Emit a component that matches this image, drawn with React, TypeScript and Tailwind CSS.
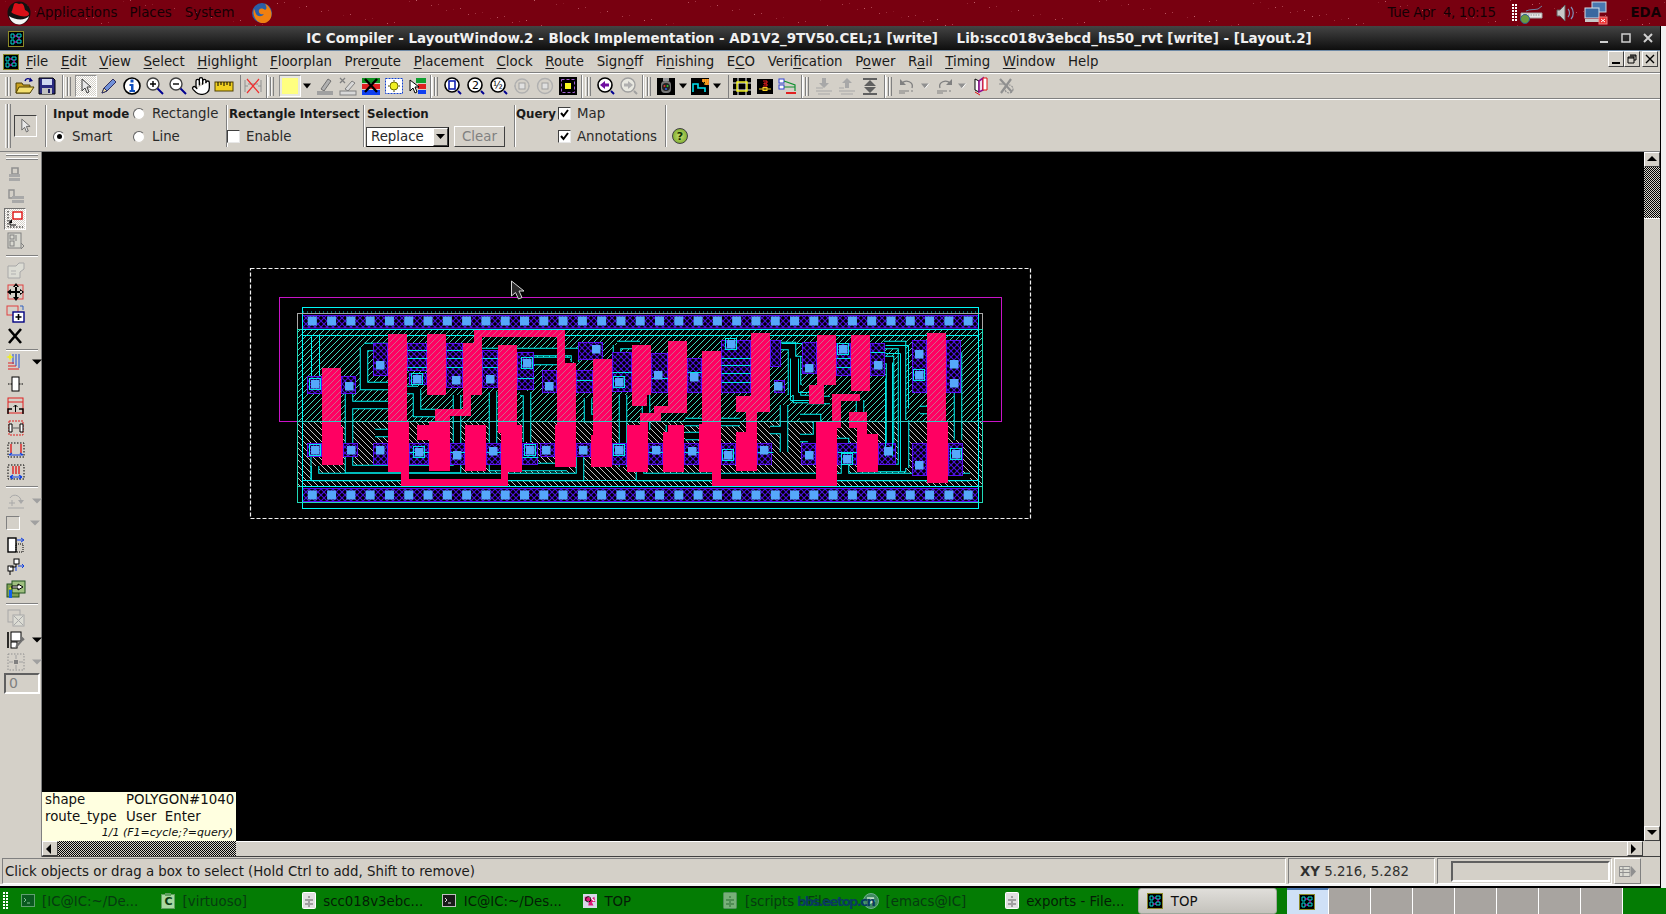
import type { ReactNode } from 'react'
import { Hand } from 'lucide-react'

// pseudo random speckles for the wallpaper strip
const speckles = Array.from({ length: 170 }, (_, i) => {
  const a = (i * 7919 + 13) % 1666
  const b = (i * 104729 + 7) % 26
  return { x: a, y: b, o: 0.12 + ((i * 31) % 10) / 22 }
})

const menus = [
  ['File', 0], ['Edit', 0], ['View', 0], ['Select', 0], ['Highlight', 0], ['Floorplan', 0], ['Preroute', 4],
  ['Placement', 0], ['Clock', 0], ['Route', 0], ['Signoff', 4], ['Finishing', 2], ['ECO', 1], ['Verification', 4],
  ['Power', 1], ['Rail', 1], ['Timing', 0], ['Window', 0], ['Help', -1],
] as const

const tasks = [
  { kind: 'term', label: '[IC@IC:~/De...', dim: true },
  { kind: 'virt', label: '[virtuoso]', dim: true },
  { kind: 'file', label: 'scc018v3ebc...', dim: false },
  { kind: 'term2', label: 'IC@IC:~/Des...', dim: false },
  { kind: 'top', label: 'TOP', dim: false },
  { kind: 'filedim', label: '[scripts - File...', dim: true },
  { kind: 'emacs', label: '[emacs@IC]', dim: true },
  { kind: 'file', label: 'exports - File...', dim: false },
]

// layout data, in screen pixels
const pink = [
  [322, 368, 19, 53], [322, 421, 19, 6], [322, 427, 21, 38],
  [388, 334, 19, 88], [388, 422, 21, 50],
  [427, 334, 19, 61],
  [463, 343, 19, 52], [474, 330, 91, 7], [474, 330, 8, 14], [557, 330, 8, 33], [557, 363, 19, 62], [555, 425, 21, 42],
  [463, 395, 8, 21], [435, 409, 36, 7], [435, 416, 15, 6], [417, 425, 33, 15], [429, 422, 21, 49],
  [465, 425, 21, 46],
  [498, 345, 19, 80], [498, 425, 24, 8], [501, 433, 21, 39],
  [401, 472, 8, 14], [401, 479, 107, 7], [501, 472, 7, 14],
  [593, 359, 19, 63], [593, 422, 19, 13], [591, 435, 21, 32],
  [632, 345, 19, 50], [632, 395, 15, 11], [640, 413, 21, 9], [640, 422, 8, 5], [654, 406, 33, 7], [668, 341, 19, 72],
  [627, 425, 21, 47],
  [668, 425, 16, 7], [663, 432, 21, 40],
  [702, 351, 19, 73], [699, 424, 22, 48], [712, 472, 9, 14], [712, 479, 125, 7],
  [751, 333, 19, 79], [736, 396, 34, 16], [746, 412, 11, 20], [736, 432, 21, 39],
  [817, 335, 19, 50], [809, 385, 15, 19],
  [816, 422, 21, 64],
  [851, 335, 19, 56], [832, 394, 28, 7], [832, 394, 9, 34],
  [849, 412, 18, 16], [857, 428, 10, 6], [857, 434, 21, 38],
  [927, 333, 19, 89], [927, 422, 21, 61],
]

const purple = [
  [307, 376, 15, 18], [341, 376, 15, 18], [373, 343, 15, 33], [407, 343, 20, 28], [409, 373, 18, 12], [446, 343, 17, 45],
  [482, 350, 16, 38], [517, 352, 17, 38], [542, 370, 15, 23], [576, 370, 17, 23], [578, 342, 25, 18], [612, 352, 20, 40],
  [651, 353, 17, 40], [687, 358, 15, 35], [721, 340, 30, 53], [770, 340, 11, 27], [774, 380, 11, 13], [802, 342, 15, 32],
  [836, 343, 15, 33], [870, 343, 15, 33], [912, 340, 15, 53], [946, 340, 15, 53],
  [307, 443, 15, 14], [343, 443, 15, 14], [373, 443, 15, 22], [409, 443, 20, 22], [450, 443, 15, 22], [486, 443, 15, 22],
  [522, 443, 16, 22], [540, 443, 15, 14], [576, 443, 15, 14], [612, 443, 15, 22], [648, 443, 15, 22], [684, 443, 15, 22],
  [721, 443, 15, 22], [757, 443, 15, 22], [801, 443, 15, 22], [837, 443, 20, 22], [878, 443, 18, 22], [912, 443, 15, 33],
  [948, 443, 15, 33],
]

const contacts = [
  [315, 384], [349, 386], [380, 365], [417, 379], [456, 380], [490, 379], [527, 363], [549, 386], [596, 349], [619, 382],
  [658, 375], [694, 377], [731, 344], [778, 386], [809, 368], [843, 349], [878, 365], [919, 354], [919, 375], [954, 364], [954, 383],
  [315, 450], [351, 450], [380, 450], [419, 452], [457, 455], [493, 451], [530, 450], [546, 450], [583, 450], [619, 450],
  [656, 450], [692, 451], [728, 455], [764, 450], [809, 455], [847, 459], [888, 451], [919, 465], [956, 454],
]

const wires = [
  '364 347 H388 M364 347 V386 H388',
  '349 383 V469 H457 V395',
  '315 466 V477 H580 V450',
  '349 405 H388',
  '375 433 H388',
  '417 390 V413 H437 M407 390 H417',
  '527 392 V442 M520 392 H527',
  '493 392 V467 H567',
  '482 352 H575 V362',
  '515 361 H570',
  '588 398 V418 H593',
  '482 370 H517',
  '407 350 H427 M407 362 H427',
  '446 352 H463 M446 366 H463',
  '617 345 H640 M617 345 V352',
  '623 395 V467',
  '640 470 V477 H970',
  '646 395 V430',
  '721 350 H751 M721 366 H751 M721 380 H751',
  '775 346 H792 V395 M792 388 H802',
  '789 360 H797 V399 H815',
  '784 405 V452 M784 430 H770',
  '800 418 H817 V438 H800',
  '830 400 H808 M808 442 H845 V476',
  '884 345 H902 V468 H860',
  '876 360 H890 V450',
  '860 400 V418',
  '920 410 H934 M905 420 V468',
  '958 352 V440',
  '685 422 H740 M685 436 H712',
  '670 425 V440',
]

// thin metal edges that run over the diffusion
const edges =
  'M721 358H751M721 365H751M721 373H751M721 382H751' +
  'M407 350H427M407 358H427M407 367H427M446 350H463M446 358H463M446 367H463M482 358H498M482 367H498' +
  'M790 358V400H810M798 358V392H809M781 343H802M885 345H908V408M885 353H900V471M892 362V456M885 378V456' +
  'M836 358H851M836 367H851M870 352H885M517 378H534M576 380H593M612 372H632M651 378H668M687 372H702' +
  'M409 452H429M450 452H465M486 452H501M522 457H538M648 452H663M684 452H699M757 452H773M837 452H857'

function Ico({ children, s = 20 }: { children: ReactNode; s?: number }) {
  return (
    <svg width={s} height={s} viewBox="0 0 20 20" className="block">
      {children}
    </svg>
  )
}

function Handle({ className = '' }: { className?: string }) {
  return (
    <div className={`flex h-[19px] w-[6px] shrink-0 justify-between ${className}`}>
      <div className="w-[3px] border-x border-l-[#f4f4f4] border-r-[#808080] bg-[#d4d0c8]" />
      <div className="w-[3px] border-x border-l-[#f4f4f4] border-r-[#808080] bg-[#d4d0c8]" />
    </div>
  )
}

function Groove({ className = '' }: { className?: string }) {
  return <div className={`h-[23px] w-[2px] shrink-0 border-r border-r-white bg-[#808080] ${className}`} />
}

function Tool({ children, w = 'w-[23px]' }: { children?: ReactNode; w?: string }) {
  return <div className={`flex h-[22px] shrink-0 items-center justify-center ${w}`}>{children}</div>
}

function Drop({ gray, w = 'w-[11px]' }: { gray?: boolean; w?: string }) {
  return (
    <Tool w={w}>
      <svg width="10" height="6" viewBox="0 0 10 6" className="block">
        <path d="M1 0.5H9L5 5.5Z" fill={gray ? '#909090' : '#000'} />
        {gray && <path d="M9 0.5L5 5.5" stroke="#fff" fill="none" />}
      </svg>
    </Tool>
  )
}

function ICLogo({ s = 16 }: { s?: number }) {
  return (
    <svg width={s} height={s} viewBox="0 0 16 16" className="block shrink-0">
      <rect x="0.5" y="0.5" width="15" height="15" fill="#000" stroke="#8c8a28" />
      <path d="M3 3H6V7H3ZM3 9H6V13H3ZM9 3H13V6H9ZM9 9H13V12H9Z" fill="none" stroke="#00d8d8" />
      <path d="M6 5H9M6 11H9M11 6V9" stroke="#e020e0" fill="none" />
    </svg>
  )
}

function Gripper() {
  return (
    <svg width="5" height="18" viewBox="0 0 5 18" className="block shrink-0">
      {[0, 3, 6, 9, 12, 15].map(y => (
        <g key={y}>
          <rect x="0" y={y} width="2" height="2" fill="#fff" />
          <rect x="3" y={y} width="2" height="2" fill="#fff" />
        </g>
      ))}
    </svg>
  )
}

function MiniCircle({ children }: { children: ReactNode }) {
  return (
    <Ico>
      <circle cx="9" cy="9" r="7" fill="#fff" stroke="#000" strokeWidth="1.6" />
      <path d="M15 15L18 18" stroke="#000090" strokeWidth="2" />
      {children}
    </Ico>
  )
}

function TopToolbar() {
  return (
    <div className="flex h-[24px] items-center">
      <Handle className="ml-[5px] mr-[3px]" />
      <Tool w="w-[22px]">
        <Ico>
          <path d="M1 7H7L8 9H15V17H1Z" fill="#c8a020" stroke="#504000" />
          <path d="M1 17L4 11H19L15 17Z" fill="#f4e070" stroke="#504000" />
          <path d="M10 5C11 2 14 2 16 4" fill="none" stroke="#000080" strokeWidth="1.4" />
          <path d="M15 1.5L18 5L14 6Z" fill="#000080" />
        </Ico>
      </Tool>
      <Tool w="w-[22px]">
        <Ico>
          <path d="M2 2H16L18 4V18H2Z" fill="#2a2a80" stroke="#000" />
          <rect x="5" y="3" width="10" height="6" fill="#d0d8f0" />
          <rect x="5" y="12" width="10" height="6" fill="#c0c0c0" />
          <rect x="11" y="13" width="2" height="4" fill="#202060" />
        </Ico>
      </Tool>
      <Groove className="ml-[4px]" />
      <Handle className="ml-[1px] mr-[3px]" />
      <Tool w="w-[23px]">
        <div className="flex h-[22px] w-[22px] items-center justify-center border border-t-[#909090] border-l-[#909090] border-r-white border-b-white bg-[repeating-conic-gradient(#ffffff_0_25%,#d4d0c8_0_50%)] bg-[length:2px_2px]">
          <svg width="12" height="16" viewBox="0 0 12 16" className="block">
            <path d="M2 1V13L5 10L7 15L9 14L7 9H11Z" fill="#e8e8e8" stroke="#404040" />
          </svg>
        </div>
      </Tool>
      <Tool>
        <Ico>
          <path d="M3 17L5 12L14 3L17 6L8 15Z" fill="#7090d8" stroke="#303060" />
          <path d="M3 17L5 12L8 15Z" fill="#f0e0a0" stroke="#303060" />
        </Ico>
      </Tool>
      <Tool>
        <Ico>
          <circle cx="10" cy="10" r="8" fill="#fff" stroke="#000" strokeWidth="1.6" />
          <rect x="8.5" y="3.5" width="3" height="3" fill="#1050c0" />
          <path d="M7.5 8H11.5V14H13V16H7.5V14H9V10H7.5Z" fill="#1050c0" />
        </Ico>
      </Tool>
      <Tool>
        <Ico>
          <circle cx="8" cy="8" r="6" fill="#fff" stroke="#404040" strokeWidth="1.4" />
          <path d="M5 8H11M8 5V11" stroke="#000" strokeWidth="1.4" />
          <path d="M12.5 12.5L18 18" stroke="#000090" strokeWidth="2" />
        </Ico>
      </Tool>
      <Tool>
        <Ico>
          <circle cx="8" cy="8" r="6" fill="#fff" stroke="#404040" strokeWidth="1.4" />
          <path d="M5 8H11" stroke="#000" strokeWidth="1.4" />
          <path d="M12.5 12.5L18 18" stroke="#000090" strokeWidth="2" />
        </Ico>
      </Tool>
      <Tool>
        <Hand size={20} fill="#fff" color="#000" strokeWidth={1.6} />
      </Tool>
      <Tool>
        <Ico>
          <rect x="1" y="6" width="18" height="9" fill="#f0d020" stroke="#504000" />
          <path d="M4 6V10M7 6V9M10 6V10M13 6V9M16 6V10" stroke="#000" />
        </Ico>
      </Tool>
      <Groove className="ml-[5px] !w-[1px] !border-0" />
      <Tool>
        <Ico>
          <path d="M2 4V16M18 4V16M2 10H5M15 10H18M5 8H15" stroke="#909090" fill="none" />
          <path d="M4 3L16 17M16 3L4 17" stroke="#f03030" strokeWidth="1.2" />
        </Ico>
      </Tool>
      <Groove className="ml-[2px]" />
      <Handle className="mr-[5px]" />
      <Tool w="w-[22px]">
        <div className="flex h-[22px] w-[22px] items-center justify-center border border-t-[#909090] border-l-[#909090] border-r-white border-b-white bg-[#e8e8e0]">
          <div className="h-[16px] w-[16px] bg-[#ffff80]" />
        </div>
      </Tool>
      <Drop />
      <div className="w-[1px] shrink-0" />
      <Tool>
        <Ico>
          <path d="M6 13L13 3L16 5L9 15Z" fill="#b0b0b0" stroke="#707070" />
          <rect x="2" y="15" width="16" height="4" fill="#a0a0a0" />
        </Ico>
      </Tool>
      <Tool>
        <Ico>
          <path d="M2 2L7 7M7 2L2 7" stroke="#808080" strokeWidth="1.3" />
          <path d="M7 13L14 5L17 7L10 15Z" fill="#d8d8d8" stroke="#808080" />
          <rect x="2" y="15" width="16" height="4" fill="#d8d8d8" stroke="#808080" />
        </Ico>
      </Tool>
      <Tool>
        <Ico>
          <rect x="1" y="2" width="18" height="5" fill="#109020" />
          <rect x="1" y="8" width="18" height="5" fill="#e02020" />
          <rect x="1" y="14" width="18" height="5" fill="#1040f0" />
          <path d="M4 3L16 16M16 3L4 16" stroke="#000" strokeWidth="2.4" />
        </Ico>
      </Tool>
      <Tool>
        <Ico>
          <rect x="1.5" y="2.5" width="17" height="15" fill="#fff" stroke="#1040d0" strokeDasharray="2 1" />
          <circle cx="10" cy="10" r="4" fill="#f0f020" stroke="#707000" />
          <path d="M10 4V5.5M10 14.5V16M4 10H5.5M14.5 10H16" stroke="#404000" />
        </Ico>
      </Tool>
      <Tool>
        <Ico>
          <rect x="9" y="2" width="10" height="5" fill="#10a030" />
          <rect x="11" y="8" width="8" height="5" fill="#e02020" />
          <rect x="11" y="14" width="8" height="4" fill="#1040f0" />
          <path d="M3 4V15L6 12L8 17L10 16L8 11H12Z" fill="#fff" stroke="#000" />
        </Ico>
      </Tool>
      <Groove className="ml-[2px]" />
      <Handle className="mr-[3px]" />
      <Tool>
        <MiniCircle>
          <rect x="6" y="5" width="6" height="8" fill="#fff" stroke="#1020b0" strokeWidth="1.6" />
        </MiniCircle>
      </Tool>
      <Tool>
        <MiniCircle>
          <text x="6" y="13" fontSize="11" fontFamily="DejaVu Sans" fill="#000">2</text>
        </MiniCircle>
      </Tool>
      <Tool>
        <MiniCircle>
          <text x="4" y="13" fontSize="10" fontFamily="DejaVu Sans" fill="#000">½</text>
        </MiniCircle>
      </Tool>
      <Tool>
        <Ico>
          <circle cx="10" cy="10" r="7" fill="none" stroke="#b0b0b0" strokeWidth="1.4" />
          <rect x="7" y="7" width="6" height="6" fill="#e0e0e0" stroke="#a0a0a0" />
          <path d="M2 10H4M16 10H18" stroke="#b0b0b0" />
        </Ico>
      </Tool>
      <Tool>
        <Ico>
          <circle cx="10" cy="10" r="7.5" fill="none" stroke="#b0b0b0" strokeWidth="1.4" />
          <rect x="7" y="7" width="6" height="6" fill="#e0e0e0" stroke="#a0a0a0" />
        </Ico>
      </Tool>
      <Tool>
        <Ico>
          <rect x="1" y="1" width="18" height="18" fill="#000" />
          <rect x="3.5" y="3.5" width="13" height="13" fill="none" stroke="#a060d0" strokeDasharray="3 2" />
          <rect x="7" y="7" width="6" height="6" fill="#f8f820" />
        </Ico>
      </Tool>
      <Groove className="ml-[2px]" />
      <Handle className="ml-[2px] mr-[3px]" />
      <Tool>
        <MiniCircle>
          <path d="M4 9L9 5V7.5H13V10.5H9V13Z" fill="#7010a0" />
        </MiniCircle>
      </Tool>
      <Tool>
        <Ico>
          <circle cx="9" cy="9" r="7" fill="#e8e8e0" stroke="#a0a0a0" strokeWidth="1.4" />
          <path d="M14 9L9 5V7.5H5V10.5H9V13Z" fill="#b0b0b0" />
          <path d="M15 15L18 18" stroke="#a0a0a0" strokeWidth="2" />
        </Ico>
      </Tool>
      <Groove className="ml-[2px]" />
      <Handle className="ml-[1px] mr-[3px]" />
      <Tool>
        <Ico>
          <rect x="1" y="2" width="18" height="17" fill="#000" />
          <rect x="5" y="5" width="10" height="12" rx="4" fill="#777" />
          <circle cx="10" cy="11" r="4" fill="#222" />
          <circle cx="8.5" cy="10" r="1" fill="#e03030" />
          <circle cx="11.5" cy="10" r="1" fill="#30c030" />
          <circle cx="10" cy="13" r="1" fill="#3060f0" />
          <rect x="7" y="2" width="6" height="3" fill="#999" />
        </Ico>
      </Tool>
      <Drop />
      <Tool>
        <Ico>
          <rect x="1" y="2" width="18" height="17" fill="#000" />
          <path d="M3 16V8H8V12H15V16" fill="none" stroke="#00e0f0" strokeWidth="1.6" />
          <path d="M12 3H19V9H15V6H12Z" fill="#f08020" />
          <path d="M13 4H18M13 6H18M14 8H18" stroke="#f0e020" strokeDasharray="1 1" />
        </Ico>
      </Tool>
      <Drop w="w-[12px]" />
      <Groove className="ml-[5px] !w-[1px] !border-0" />
      <Tool w="w-[23px] ml-[1px]">
        <Ico>
          <rect x="1" y="2" width="18" height="17" fill="#000" />
          <path d="M6 2V19M14 2V19M1 7H19M1 14H19" stroke="#f8f8f8" />
          <rect x="5" y="6" width="10" height="9" fill="none" stroke="#f8f820" strokeWidth="1.4" />
        </Ico>
      </Tool>
      <Tool>
        <Ico>
          <rect x="2" y="3" width="16" height="15" fill="#000" />
          <path d="M8 5H12V7H9V8H12V10H8" fill="none" stroke="#f02020" />
          <path d="M4 13H16" stroke="#f8d020" />
          <rect x="8" y="11.5" width="4" height="3" fill="none" stroke="#f8d020" />
        </Ico>
      </Tool>
      <Tool>
        <Ico>
          <rect x="1" y="3" width="5" height="4" fill="#fff" stroke="#3040d0" />
          <rect x="1" y="9" width="5" height="4" fill="#fff" stroke="#3040d0" />
          <path d="M6 5L17 9V15M6 11H17" fill="none" stroke="#109030" strokeWidth="1.2" />
          <rect x="8" y="16" width="10" height="2" fill="#e02020" />
        </Ico>
      </Tool>
      <Groove className="ml-[2px]" />
      <Handle className="mr-[3px]" />
      <Tool>
        <Ico>
          <path d="M8 2H12V7H15L10 12L5 7H8Z" fill="#a8a8a8" />
          <path d="M2 12H9M2 15H18M4 18H16" stroke="#a8a8a8" strokeWidth="1.2" />
        </Ico>
      </Tool>
      <Tool>
        <Ico>
          <path d="M8 12V7H5L10 2L15 7H12V12Z" fill="#a8a8a8" />
          <path d="M2 12H7M2 15H18M4 18H16" stroke="#a8a8a8" strokeWidth="1.2" />
        </Ico>
      </Tool>
      <Tool>
        <Ico>
          <path d="M3 2H17V4H3ZM10 4L16 10H4ZM4 11H16L10 17ZM3 17H17V19H3Z" fill="#606060" />
        </Ico>
      </Tool>
      <Groove className="ml-[3px]" />
      <Handle className="mr-[3px]" />
      <Tool>
        <Ico>
          <path d="M15 12C17 6 9 3 5 7" fill="none" stroke="#808080" strokeWidth="1.3" />
          <path d="M3 3V9H9Z" fill="#808080" />
          <path d="M2 15H12M14 15H16M2 17H8" stroke="#808080" />
        </Ico>
      </Tool>
      <Drop gray w="w-[13px]" />
      <Tool w="w-[23px] ml-[2px]">
        <Ico>
          <path d="M5 12C3 6 11 3 15 7" fill="none" stroke="#808080" strokeWidth="1.3" />
          <path d="M17 3V9H11Z" fill="#808080" />
          <path d="M2 15H12M14 15H16M2 17H8" stroke="#808080" />
        </Ico>
      </Tool>
      <Drop gray w="w-[12px]" />
      <Tool w="w-[23px] ml-[2px]">
        <Ico>
          <path d="M3 3L7 5V16L3 14Z" fill="#fff" stroke="#000" />
          <path d="M7 5L11 2V14L7 16Z" fill="#f0e0f0" stroke="#901090" strokeWidth="1.6" />
          <path d="M11 2H15V14H11Z" fill="#fff" stroke="#e01010" />
          <path d="M3 16L8 19" stroke="#e01010" />
        </Ico>
      </Tool>
      <Tool w="w-[23px] ml-[1px]">
        <Ico>
          <path d="M4 3L16 16M15 3L5 17" stroke="#909090" strokeWidth="2.2" />
          <circle cx="13" cy="13" r="4" fill="none" stroke="#909090" strokeWidth="1.2" strokeDasharray="2 1" />
          <path d="M3 8H8" stroke="#909090" />
        </Ico>
      </Tool>
    </div>
  )
}

function Radio({ on }: { on?: boolean }) {
  return (
    <span className="flex h-[12px] w-[12px] shrink-0 items-center justify-center rounded-full border border-t-[#606060] border-l-[#606060] border-r-[#d4d0c8] border-b-[#d4d0c8] bg-white">
      {on && <span className="h-[5px] w-[5px] rounded-full bg-black" />}
    </span>
  )
}

function Check({ on }: { on?: boolean }) {
  return (
    <span className="flex h-[13px] w-[13px] shrink-0 items-center justify-center border border-t-[#404040] border-l-[#404040] border-r-[#e8e8e8] border-b-[#e8e8e8] bg-white">
      {on && (
        <svg width="9" height="9" viewBox="0 0 9 9" className="block">
          <path d="M1 4L3.5 7L8 1" fill="none" stroke="#000" strokeWidth="2" />
        </svg>
      )}
    </span>
  )
}

function OptSep({ className = '' }: { className?: string }) {
  return <div className={`h-[42px] w-[2px] shrink-0 border-r border-r-white bg-[#808080] ${className}`} />
}

function OptionsBar() {
  return (
    <div className="flex h-[51px] items-center text-[13.33px] leading-[22px] text-[#2a2a2a]">
      <div className="ml-[5px] flex h-[44px] w-[6px] shrink-0 justify-between">
        <div className="w-[3px] border-x border-l-[#f4f4f4] border-r-[#808080]" />
        <div className="w-[3px] border-x border-l-[#f4f4f4] border-r-[#808080]" />
      </div>
      <div className="ml-[3px] flex h-[22px] w-[23px] shrink-0 items-center justify-center border border-t-[#404040] border-l-[#404040] border-r-white border-b-white">
        <svg width="11" height="15" viewBox="0 0 12 16" className="block">
          <path d="M2 1V13L5 10L7 15L9 14L7 9H11Z" fill="#e8e8e8" stroke="#606060" />
        </svg>
      </div>
      <OptSep className="ml-[8px]" />
      <div className="ml-[6px] mt-[2px] grid w-[173px] shrink-0 grid-cols-[80px_1fr] grid-rows-[23px_23px] self-start">
        <div className="whitespace-nowrap pt-[1px] text-[11.8px] font-bold text-[#1a1a1a]">Input mode</div>
        <div className="flex items-center gap-[7px]"><Radio />Rectangle</div>
        <div className="flex items-center gap-[7px]"><Radio on />Smart</div>
        <div className="flex items-center gap-[7px]"><Radio />Line</div>
      </div>
      <OptSep />
      <div className="ml-[1px] mt-[2px] grid w-[134px] shrink-0 grid-rows-[23px_23px] self-start">
        <div className="whitespace-nowrap pt-[1px] text-[11.8px] font-bold text-[#1a1a1a]">Rectangle Intersect</div>
        <div className="-ml-[2px] flex items-center gap-[6px]"><Check />Enable</div>
      </div>
      <OptSep />
      <div className="ml-[2px] mt-[2px] grid w-[145px] shrink-0 grid-rows-[23px_23px] self-start">
        <div className="pt-[1px] text-[11.8px] font-bold text-[#1a1a1a]">Selection</div>
        <div className="flex items-center">
          <div className="-ml-[1px] flex h-[20px] w-[83px] items-center justify-between border border-t-[#404040] border-l-[#404040] border-r-black border-b-black bg-white pl-[4px]">
            <span>Replace</span>
            <span className="flex h-[18px] w-[15px] items-center justify-center border border-t-white border-l-white border-r-[#404040] border-b-[#404040] bg-[#d4d0c8]">
              <svg width="9" height="5" viewBox="0 0 9 5" className="block"><path d="M0 0H9L4.5 5Z" fill="#000" /></svg>
            </span>
          </div>
          <div className="ml-[5px] flex h-[21px] w-[51px] items-center justify-center border border-t-white border-l-white border-r-[#404040] border-b-[#404040] text-[#808080]">
            Clear
          </div>
        </div>
      </div>
      <OptSep className="ml-[2px]" />
      <div className="mt-[2px] grid w-[149px] shrink-0 grid-cols-[42px_1fr] grid-rows-[23px_23px] self-start">
        <div className="pt-[1px] text-[11.8px] font-bold text-[#1a1a1a]">Query</div>
        <div className="flex items-center gap-[6px]"><Check on />Map</div>
        <div />
        <div className="flex items-center gap-[6px]"><Check on />Annotations</div>
      </div>
      <OptSep />
      <div className="ml-[5px] mt-[21px] flex h-[16px] w-[16px] items-center justify-center rounded-full border border-[#404040] bg-[radial-gradient(circle,#c8e070,#6aa020)] text-[11px] font-bold leading-none text-[#103000]">
        ?
      </div>
    </div>
  )
}

function Cell({ children }: { children?: ReactNode }) {
  return <div className="flex h-[22px] w-[40px] shrink-0 items-center pl-[4px]">{children}</div>
}

function SideSep({ className = 'mt-[3px] mb-[2px]' }: { className?: string }) {
  return <div className={`mx-[4px] h-[2px] w-[32px] shrink-0 border-b border-b-white bg-[#808080] ${className}`} />
}

function SideDrop({ gray }: { gray?: boolean }) {
  return (
    <svg width="10" height="6" viewBox="0 0 10 6" className="ml-[6px] block">
      <path d="M0 0.5H10L5 5.5Z" fill={gray ? '#a0a0a0' : '#000'} />
    </svg>
  )
}

function LeftToolbar() {
  return (
    <div className="flex w-[40px] shrink-0 flex-col border-r border-r-[#808080] bg-[#d4d0c8]">
      <div className="mx-[4px] mb-[4px] mt-[2px] h-[6px] w-[32px] border-y border-t-white border-b-[#808080] bg-[#d4d0c8] shadow-[inset_0_1px_0_#808080,inset_0_-1px_0_#ffffff]" />
      <Cell>
        <Ico>
          <path d="M6 3H12V9H6Z" fill="none" stroke="#909090" strokeWidth="1.6" />
          <path d="M3 9H14V12H3ZM3 13H14V16H3Z" fill="#a8a8a8" />
        </Ico>
      </Cell>
      <Cell>
        <Ico>
          <path d="M3 3H8V11H3Z" fill="none" stroke="#909090" strokeWidth="1.4" />
          <path d="M6 9H18V12H6ZM6 13H18V16H6Z" fill="#a8a8a8" />
        </Ico>
      </Cell>
      <Cell>
        <div className="-ml-[2px] flex h-[22px] w-[22px] items-center justify-center border border-t-[#707070] border-l-[#707070] border-r-white border-b-white bg-[repeating-conic-gradient(#ffffff_0_25%,#d4d0c8_0_50%)] bg-[length:2px_2px]">
          <svg width="18" height="18" viewBox="0 0 18 18" className="block">
            <path d="M2 1V17H17" fill="none" stroke="#000" strokeDasharray="1.5 1.5" />
            <rect x="7" y="2" width="9" height="7" fill="#fff" stroke="#e01010" strokeWidth="1.4" />
            <path d="M6 9L3 13H6Z" fill="#000" />
            <path d="M4 10V15H10" fill="none" stroke="#000" />
          </svg>
        </div>
      </Cell>
      <Cell>
        <Ico>
          <rect x="2" y="2" width="13" height="15" fill="#d8d8d0" stroke="#808080" />
          <rect x="4" y="4" width="4" height="4" fill="none" stroke="#808080" />
          <rect x="4" y="10" width="4" height="5" fill="none" stroke="#808080" />
          <path d="M10 4V10M15 12L18 15M15 18L18 15" stroke="#808080" />
        </Ico>
      </Cell>
      <SideSep />
      <Cell>
        <Ico>
          <path d="M2 6H10L13 3H18V9L14 12V18H2Z" fill="#dcdcd4" stroke="#a8a8a8" />
          <path d="M5 11H10M5 14H10" stroke="#b0b0b0" />
        </Ico>
      </Cell>
      <Cell>
        <Ico>
          <rect x="2" y="3" width="15" height="14" fill="none" stroke="#e04040" />
          <path d="M10 1L7 5H13ZM10 19L7 15H13ZM1 10L5 7V13ZM18 10L14 7V13ZM9 4H11V16H9ZM4 9H16V11H4Z" fill="#000" />
        </Ico>
      </Cell>
      <Cell>
        <Ico>
          <rect x="1" y="2" width="11" height="9" fill="none" stroke="#e04040" />
          <rect x="7" y="8" width="11" height="10" fill="#fff" stroke="#000080" strokeWidth="1.4" />
          <path d="M12.5 10V16M9.5 13H15.5" stroke="#000" strokeWidth="1.6" />
          <path d="M14 2H17V6" fill="none" stroke="#3060c0" />
        </Ico>
      </Cell>
      <Cell>
        <Ico>
          <path d="M3 3L15 17M15 3L3 17" stroke="#000" strokeWidth="2.6" />
        </Ico>
      </Cell>
      <SideSep className="mt-[2px]" />
      <Cell>
        <Ico>
          <path d="M7 2V12M10 2V14M13 2V16" stroke="#2050d0" fill="none" />
          <path d="M2 11H8M2 14H10M2 17H13" stroke="#e02020" />
          <path d="M4 1L5 4L8 5L5 6L4 9L3 6L0 5L3 4Z" fill="#f0f020" />
        </Ico>
        <SideDrop />
      </Cell>
      <Cell>
        <Ico>
          <rect x="6" y="3" width="7" height="14" fill="#fff" stroke="#000" />
          <path d="M2 10H6M13 10H17" stroke="#000" strokeDasharray="1.5 1" />
        </Ico>
      </Cell>
      <Cell>
        <Ico>
          <rect x="2" y="2" width="15" height="15" fill="none" stroke="#e02020" />
          <path d="M2 6H17" stroke="#e02020" />
          <path d="M2 18V13H6M17 18V13H13" fill="none" stroke="#000" strokeWidth="1.4" />
          <path d="M9.5 16V9M7.5 11L9.5 9L11.5 11" stroke="#000" fill="none" />
        </Ico>
      </Cell>
      <Cell>
        <Ico>
          <rect x="3" y="3" width="14" height="14" fill="none" stroke="#e02020" strokeDasharray="2 1" />
          <path d="M3 6V14H6V6ZM14 6V14H17V6Z" fill="#fff" stroke="#000" />
          <path d="M7 10H13" stroke="#606060" />
        </Ico>
      </Cell>
      <Cell>
        <Ico>
          <rect x="2" y="3" width="16" height="14" fill="none" stroke="#000" strokeDasharray="1.5 1.5" />
          <path d="M5 4V13M15 4V13" stroke="#e02020" strokeWidth="1.4" />
          <path d="M3 15H17M3 15L6 13M17 15L14 13" stroke="#1040e0" strokeWidth="1.2" />
        </Ico>
      </Cell>
      <Cell>
        <Ico>
          <rect x="2" y="3" width="16" height="14" fill="none" stroke="#000" strokeDasharray="1.5 1.5" />
          <path d="M7 4V12M10 4V12M13 4V12" stroke="#e02020" strokeWidth="1.4" />
          <path d="M4 15H16M4 15L7 13M16 15L13 13M4 15L7 17M16 15L13 17" stroke="#1040e0" strokeWidth="1.2" />
        </Ico>
      </Cell>
      <SideSep />
      <Cell>
        <Ico>
          <path d="M4 7C6 3 13 3 15 9" fill="none" stroke="#a8a8a8" />
          <path d="M12 9H18L15 13Z" fill="#a8a8a8" />
          <path d="M3 12H9M6 9V15M2 17H18" stroke="#a8a8a8" />
        </Ico>
        <SideDrop gray />
      </Cell>
      <Cell>
        <div className="h-[14px] w-[14px] border border-t-[#808080] border-l-[#808080] border-r-white border-b-white" />
        <span className="ml-[4px]"><SideDrop gray /></span>
      </Cell>
      <Cell>
        <Ico>
          <rect x="2" y="3" width="8" height="14" fill="#fff" stroke="#000" strokeWidth="1.4" />
          <rect x="10" y="9" width="7" height="8" fill="none" stroke="#000" strokeDasharray="1 1" />
          <path d="M11 5H17M15 3L18 5L15 7" stroke="#1040e0" fill="none" />
        </Ico>
      </Cell>
      <Cell>
        <Ico>
          <rect x="8" y="2" width="5" height="5" fill="#fff" stroke="#000" />
          <rect x="2" y="9" width="5" height="5" fill="#fff" stroke="#000" />
          <path d="M10 7V10H4M4 14V18" stroke="#000" fill="none" />
          <path d="M10 14V10M12 9H18M16 7L18 9L16 11" stroke="#1040e0" fill="none" />
        </Ico>
      </Cell>
      <Cell>
        <Ico>
          <rect x="1" y="5" width="12" height="13" fill="#80a050" stroke="#205020" />
          <rect x="6" y="2" width="13" height="12" fill="#a0c080" stroke="#205020" />
          <path d="M6 7H12V5L17 8L12 11V9H6Z" fill="#fff" stroke="#000" />
          <rect x="3" y="11" width="3" height="8" fill="#1060f0" />
          <path d="M4.5 8L5 10L3 10Z" fill="#f0f020" />
        </Ico>
      </Cell>
      <SideSep />
      <Cell>
        <Ico>
          <rect x="2" y="2" width="12" height="12" fill="none" stroke="#a8a8a8" />
          <rect x="7" y="7" width="11" height="11" fill="#dcdcd4" stroke="#a8a8a8" />
          <path d="M8 8L17 17M17 8L8 17" stroke="#a8a8a8" />
        </Ico>
      </Cell>
      <Cell>
        <Ico>
          <path d="M2 2V18" stroke="#000" strokeWidth="1.6" />
          <rect x="5" y="2" width="10" height="9" fill="#fff" stroke="#000" />
          <rect x="5" y="12" width="6" height="6" fill="#fff" stroke="#000" />
          <path d="M10 17L17 9M15 7L18 10" stroke="#707070" strokeWidth="2" />
        </Ico>
        <SideDrop />
      </Cell>
      <Cell>
        <Ico>
          <rect x="2" y="2" width="16" height="16" fill="none" stroke="#909090" strokeDasharray="1.5 1.5" />
          <rect x="8" y="8" width="4" height="4" fill="#808080" />
          <path d="M3 10H7M13 10H17M10 3V7M10 13V17" stroke="#a0a0a0" />
        </Ico>
        <SideDrop gray />
      </Cell>
      <div className="mx-[2px] flex h-[21px] w-[36px] items-center border-2 border-t-[#606060] border-l-[#606060] border-r-white border-b-white pl-[3px] text-[14px] text-[#808080]">
        0
      </div>
    </div>
  )
}

function LayoutDrawing() {
  const squares = Array.from({ length: 35 }, (_, i) => 312.3 + i * 19.29)
  return (
    <svg viewBox="42 152 1602 689" className="block h-full w-full">
      <defs>
        <pattern id="up" width="6" height="6" patternUnits="userSpaceOnUse">
          <path d="M-1 1L1 -1M0 6L6 0M5 7L7 5" stroke="#40dcc0" strokeWidth="1" />
        </pattern>
        <pattern id="uppink" width="6" height="6" patternUnits="userSpaceOnUse">
          <path d="M-1 1L1 -1M0 6L6 0M5 7L7 5" stroke="#c8708c" strokeWidth="0.9" />
        </pattern>
        <pattern id="low" width="6" height="6" patternUnits="userSpaceOnUse">
          <path d="M-1 5L1 7M0 0L6 6M5 -1L7 1" stroke="#c4c4c4" strokeWidth="1" />
        </pattern>
        <pattern id="pur" width="6" height="6" patternUnits="userSpaceOnUse">
          <path d="M0 6L6 0M0 0L6 6" stroke="#4c10e0" strokeWidth="1.1" />
        </pattern>
        <clipPath id="uclip">
          <rect x="297" y="329" width="685" height="93" />
        </clipPath>
      </defs>

      <rect x="297.5" y="329.5" width="685" height="92" fill="url(#up)" />
      <rect x="297.5" y="421.5" width="685" height="65" fill="url(#low)" />

      {/* metal wires: cyan outline, black core */}
      <g fill="none" strokeLinejoin="miter">
        {wires.map((d, i) => (
          <path key={i} d={`M${d}`} stroke="#00f8f8" strokeWidth="8.5" />
        ))}
        {wires.map((d, i) => (
          <path key={i} d={`M${d}`} stroke="#000" strokeWidth="6.5" />
        ))}
      </g>

      {/* cell inner frame */}
      <path d="M302.5 335.5H978M311.5 336V378M319.5 336V376M302 480.5H978M311 445V481" fill="none" stroke="#00f0f0" />

      {purple.map(([x, y, w, h], i) => (
        <g key={i}>
          <rect x={x} y={y} width={w} height={h} fill="#000" />
          <rect x={x + 0.5} y={y + 0.5} width={w - 1} height={h - 1} fill="url(#pur)" stroke="#5a10f0" />
        </g>
      ))}
      <path d={edges} fill="none" stroke="#00e8e8" transform="translate(0.5 0.5)" />

      {pink.map(([x, y, w, h], i) => (
        <rect key={i} x={x} y={y} width={w} height={h} fill="#ff0062" />
      ))}
      <g clipPath="url(#uclip)">
        {pink.map(([x, y, w, h], i) => (
          <rect key={i} x={x} y={y} width={w} height={h} fill="url(#uppink)" />
        ))}
      </g>

      {contacts.map(([x, y], i) => (
        <g key={i}>
          {i % 3 === 0 && <rect x={x - 5.5} y={y - 5.5} width="11" height="11" fill="none" stroke="#00e8e8" />}
          <rect x={x - 4} y={y - 4} width="8.5" height="8.5" fill="#55a8fa" />
        </g>
      ))}

      {/* power rails */}
      <rect x="302.5" y="315.5" width="676" height="12.5" fill="url(#pur)" stroke="#5a10f0" />
      <rect x="302.5" y="488.5" width="676" height="13" fill="url(#pur)" stroke="#5a10f0" />
      <path d="M303 312H978" stroke="#00e0e0" strokeDasharray="1 3" />
      {squares.map((x, i) => (
        <g key={i}>
          <rect x={x - 4.5} y={316.5} width="9" height="9" fill="#55a8fa" />
          <rect x={x - 4.5} y={490.5} width="9" height="9" fill="#55a8fa" />
        </g>
      ))}

      {/* outlines */}
      <rect x="302.5" y="307.5" width="676" height="201" fill="none" stroke="#00f8f8" />
      <rect x="297.5" y="313.5" width="685" height="189" fill="none" stroke="#a8a8a8" />
      <rect x="297.5" y="329.5" width="685" height="173" fill="none" stroke="#20d8b8" />
      <path d="M297 486.5H982M297 421.5H982" stroke="#20d8b8" />
      <path d="M302 486.5H978M302 329.5H978" stroke="#00f8f8" />
      <rect x="279.5" y="297.5" width="722" height="124" fill="none" stroke="#c814c8" />
      <path d="M297 421.5H982" stroke="#30c8c0" />
      <rect x="250.5" y="268.5" width="780" height="250" fill="none" stroke="#f0f0f0" strokeWidth="1.2" strokeDasharray="4 2" />

      {/* mouse pointer */}
      <path d="M511.5 281V296L515.5 292.5L518.5 299L522 297.5L519 291H524Z" fill="#2a2a2a" stroke="#d8d8d8" />
    </svg>
  )
}

function ScrollArrow({ dir }: { dir: 'up' | 'down' | 'left' | 'right' }) {
  const d = { up: 'M0 6H10L5 1Z', down: 'M0 1H10L5 6Z', left: 'M6 0V10L1 5Z', right: 'M1 0V10L6 5Z' }[dir]
  return (
    <div className="flex h-[15px] w-[16px] shrink-0 items-center justify-center border border-t-white border-l-white border-r-[#404040] border-b-[#404040] bg-[#d4d0c8]">
      <svg width="10" height="10" viewBox="0 0 10 10" className="block"><path d={d} fill="#000" /></svg>
    </div>
  )
}

function TaskIcon({ kind }: { kind: string }) {
  if (kind === 'top') {
    return (
      <svg width="14" height="14" viewBox="0 0 16 16" className="block">
        <rect width="16" height="16" fill="#d8d8e8" />
        <path d="M2 3H8L10 5L13 3L14 9H10L12 13H6L7 8L2 8Z" fill="#e01878" />
        <path d="M7 3L13 8" stroke="#fff" strokeWidth="1.6" />
        <circle cx="6" cy="6" r="3" fill="none" stroke="#000" />
      </svg>
    )
  }
  if (kind === 'term' || kind === 'term2') {
    const dim = kind === 'term'
    return (
      <svg width="14" height="15" viewBox="0 0 14 15" className="block">
        <rect x="0.5" y="1.5" width="13" height="12" fill={dim ? '#0a5a20' : '#1a1a1a'} stroke={dim ? '#60a070' : '#c0c0c0'} />
        <path d="M3 5L5 7L3 9M6 10H9" stroke={dim ? '#80c090' : '#e0e0e0'} fill="none" />
      </svg>
    )
  }
  if (kind === 'virt') {
    return (
      <svg width="14" height="16" viewBox="0 0 14 16" className="block">
        <rect x="0.5" y="1.5" width="13" height="14" fill="#a8d8a0" stroke="#60a060" />
        <rect x="4" y="0" width="6" height="3" fill="#60a060" />
        <text x="3.5" y="12" fontSize="11" fontWeight="bold" fontFamily="DejaVu Sans" fill="#0a3a10">C</text>
      </svg>
    )
  }
  if (kind === 'emacs') {
    return (
      <svg width="16" height="16" viewBox="0 0 16 16" className="block">
        <circle cx="8" cy="8" r="7.5" fill="#408a60" stroke="#70b090" />
        <path d="M4 5H11L5 8H12L5 11" fill="none" stroke="#c0e0c8" strokeWidth="1.4" />
      </svg>
    )
  }
  const dim = kind === 'filedim'
  return (
    <svg width="14" height="17" viewBox="0 0 14 17" className="block">
      <rect x="0.5" y="0.5" width="13" height="16" rx="1" fill={dim ? '#78b078' : '#e0e0e0'} stroke={dim ? '#50905a' : '#fff'} />
      <path d="M3 8H11M3 12H11M6 5H8M6 10H8M6 14H8" stroke={dim ? '#2a6a30' : '#606060'} />
    </svg>
  )
}

function Taskbar() {
  return (
    <div className="relative flex h-[26px] shrink-0 items-center bg-[#047c04] text-[13.33px] text-[#041c06]">
      <div className="ml-[3px] w-[10px] shrink-0"><Gripper /></div>
      {tasks.map((t, i) => (
        <div key={i} className="flex w-[140.6px] shrink-0 items-center">
          <div className="ml-[6px] flex w-[17px] shrink-0 justify-center"><TaskIcon kind={t.kind} /></div>
          <span className={`ml-[6px] whitespace-nowrap pt-[1px] ${t.dim ? 'text-[#063a10]' : ''}`}>{t.label}</span>
        </div>
      ))}
      <div className="flex h-[26px] w-[139px] shrink-0 items-center rounded-[3px] border border-[#a0a89c] bg-[linear-gradient(#e0deda,#c4c2bc)] text-[#101010]">
        <div className="ml-[8px]"><ICLogo /></div>
        <span className="ml-[8px] pt-[1px]">TOP</span>
      </div>
      <div className="ml-[10px] flex h-[26px] w-[42px] shrink-0 items-center justify-center border-t-2 border-t-[#4a78b0] border-r border-r-white bg-[#cfe0f6]">
        <ICLogo />
      </div>
      {[0, 1, 2, 3, 4, 5, 6].map(i => (
        <div key={i} className="h-[26px] w-[42px] shrink-0 border-r border-r-white bg-[#a8a4a0]" />
      ))}
      <div className="flex-1 bg-white" />
      {/* forum watermark burnt into the picture */}
      <span className="absolute left-[797px] top-[4px] whitespace-nowrap text-[13px] font-bold tracking-[-1.5px] text-[#0a3a60]">
        bbs.eetop.cn
      </span>
    </div>
  )
}

function Panel() {
  return (
    <div className="relative flex h-[26px] shrink-0 items-center overflow-hidden bg-[#780010] text-[13.33px] text-[#140004]">
      <svg width="1666" height="26" className="absolute left-0 top-0 block">
        {speckles.map((p, i) => (
          <rect key={i} x={p.x} y={p.y} width="1" height="1" fill="#ffb0b8" opacity={p.o} />
        ))}
      </svg>
      <svg width="24" height="24" viewBox="0 0 24 24" className="relative ml-[7px] block shrink-0">
        <circle cx="12" cy="12" r="11.5" fill="#111" />
        <path d="M2 15C8 19 18 20 22 15C20 22 14 23.5 12 23.5C8 23.5 3 20 2 15Z" fill="#f4f4f4" />
        <path d="M5 10L7 3C9 1 11 3 12 3C14 2 16 2 17 5L18 9C21 10 22 12 22 13C22 16 15 16 10 14C6 13 3 11 5 10Z" fill="#d81018" />
      </svg>
      <span className="relative ml-[5px]">Applications</span>
      <span className="relative ml-[12px]">Places</span>
      <span className="relative ml-[13px]">System</span>
      <svg width="22" height="22" viewBox="0 0 22 22" className="relative ml-[16px] block shrink-0">
        <circle cx="11" cy="11" r="10" fill="#2a5ea8" />
        <path d="M3 7C1 13 5 21 12 21C18 21 22 15 20 9C19 6 17 3 14 2C16 5 16 7 14 8C12 6 9 6 8 8C7 11 10 13 13 12C11 15 7 15 5 12C4 10 4 8 3 7Z" fill="#f08010" />
      </svg>
      <span className="relative ml-auto whitespace-pre tracking-[-0.35px]">Tue Apr  4, 10:15</span>
      <div className="relative ml-[16px]"><Gripper /></div>
      <svg width="24" height="22" viewBox="0 0 24 22" className="relative ml-[3px] block shrink-0">
        <path d="M1 11H22V16H1Z" fill="#e8e8e8" stroke="#a0a0a0" />
        <path d="M6 9C10 7 14 8 18 7L22 4" fill="none" stroke="#7080a0" />
        <path d="M3 13H20" stroke="#909090" strokeDasharray="1.5 1" />
        <circle cx="5" cy="17" r="4.5" fill="#6a9a40" stroke="#2a6090" />
      </svg>
      <svg width="20" height="20" viewBox="0 0 20 20" className="relative ml-[11px] block shrink-0">
        <path d="M2 7H5L10 2V18L5 13H2Z" fill="#c8c8c8" stroke="#606060" />
        <path d="M13 6C15 8 15 12 13 14M16 4C19 7 19 13 16 16" fill="none" stroke="#8090b8" strokeWidth="1.2" />
      </svg>
      <svg width="25" height="24" viewBox="0 0 25 24" className="relative ml-[9px] block shrink-0">
        <rect x="8" y="1" width="14" height="10" fill="#4a78b0" stroke="#d0d8e0" />
        <rect x="1" y="7" width="14" height="10" fill="#3a68a0" stroke="#d8e0e8" />
        <rect x="1" y="18" width="15" height="3" fill="#c8c8c8" />
        <rect x="15" y="16" width="8" height="7" fill="#f03030" stroke="#f08080" />
        <path d="M17 18L21 21M21 18L17 21" stroke="#fff" />
      </svg>
      <span className="relative ml-[22px] mr-[5px] font-bold text-[#120004]">EDA</span>
    </div>
  )
}

export default function App() {
  return (
    <div className="flex h-[914px] w-[1666px] flex-col overflow-hidden bg-white font-['DejaVu_Sans',sans-serif]">
      <Panel />

      <div className="flex min-h-0 flex-1">
        {/* application window */}
        <div className="flex w-[1661px] shrink-0 flex-col border-r border-r-black bg-[#d4d0c8]">
          <div className="relative flex h-[25px] shrink-0 items-center justify-center border-b border-b-[#6f8aa6] bg-[linear-gradient(#444444,#0e0e0e)] pt-[2px] text-[13.45px] font-bold text-[#f0f0f0]">
            <div className="absolute left-[8px] top-[5px]"><ICLogo /></div>
            <span className="ml-[-42px] whitespace-pre">IC Compiler - LayoutWindow.2 - Block Implementation - AD1V2_9TV50.CEL;1 [write]    Lib:scc018v3ebcd_hs50_rvt [write] - [Layout.2]</span>
            <div className="absolute right-[6px] top-[6px] flex items-center gap-[10px]">
              <svg width="12" height="12" viewBox="0 0 12 12" className="block"><path d="M2 10H10" stroke="#d0d0d0" strokeWidth="2" /></svg>
              <svg width="12" height="12" viewBox="0 0 12 12" className="block"><rect x="2" y="2" width="8" height="8" fill="none" stroke="#d0d0d0" strokeWidth="1.5" /></svg>
              <svg width="12" height="12" viewBox="0 0 12 12" className="block"><path d="M2 2L10 10M10 2L2 10" stroke="#d0d0d0" strokeWidth="2" /></svg>
            </div>
          </div>

          <div className="relative flex h-[21px] shrink-0 items-center pl-[3px] text-[13.33px] text-[#1a1a1a]">
            <ICLogo />
            <div className="ml-[7px] flex gap-[12.6px]">
              {menus.map(([label, idx]) => (
                <span key={label}>
                  {idx < 0 ? label : (
                    <>
                      {label.slice(0, idx)}
                      <span className="underline underline-offset-2">{label[idx]}</span>
                      {label.slice(idx + 1)}
                    </>
                  )}
                </span>
              ))}
            </div>
            <div className="absolute right-[2px] top-0 flex">
              <div className="flex h-[16px] w-[16px] items-end justify-center border border-t-white border-l-white border-r-[#404040] border-b-[#404040] pb-[2px]">
                <div className="h-[2px] w-[8px] bg-black" />
              </div>
              <div className="flex h-[16px] w-[16px] items-center justify-center border border-t-white border-l-white border-r-[#404040] border-b-[#404040]">
                <svg width="10" height="10" viewBox="0 0 10 10" className="block"><path d="M3 1H9V6H7M1 3H7V9H1ZM1 4H7M3 2H9" fill="none" stroke="#000" /></svg>
              </div>
              <div className="ml-[2px] flex h-[16px] w-[16px] items-center justify-center border border-t-white border-l-white border-r-[#404040] border-b-[#404040]">
                <svg width="10" height="10" viewBox="0 0 10 10" className="block"><path d="M1 1L9 9M9 1L1 9" stroke="#000" strokeWidth="1.4" /></svg>
              </div>
            </div>
          </div>
          <div className="h-[2px] shrink-0 border-b border-b-white bg-[#808080]" />
          <TopToolbar />
          <div className="h-[2px] shrink-0 border-b border-b-white bg-[#808080]" />
          <OptionsBar />
          <div className="h-[1px] shrink-0 bg-[#808080]" />

          <div className="flex min-h-0 flex-1 pl-[2px]">
            <LeftToolbar />
            <div className="flex min-w-0 flex-1 flex-col">
              <div className="flex min-h-0 flex-1">
                <div className="relative min-w-0 flex-1 bg-black">
                  <LayoutDrawing />
                  <div className="absolute bottom-0 left-0 w-[194px] bg-[#ffffe0] px-[3px] pb-[1px] text-[13.33px] leading-[16.5px] text-[#101010]">
                    <div className="grid grid-cols-[81px_1fr] whitespace-pre">
                      <div>shape</div><div>POLYGON#1040</div>
                      <div>route_type</div><div>User  Enter</div>
                    </div>
                    <div className="text-right text-[11px] italic leading-[15px]">1/1 (F1=cycle;?=query)</div>
                  </div>
                </div>
                <div className="flex w-[16px] shrink-0 flex-col">
                  <ScrollArrow dir="up" />
                  <div className="h-[51px] w-[16px] bg-[repeating-conic-gradient(#000000_0_25%,#d4d0c8_0_50%)] bg-[length:2px_2px]" />
                  <div className="flex-1 border-t border-t-white bg-[#d4d0c8]" />
                  <ScrollArrow dir="down" />
                </div>
              </div>
              <div className="flex h-[16px] shrink-0 border-b border-b-[#404040] pr-[17px]">
                <ScrollArrow dir="left" />
                <div className="h-[15px] w-[178px] bg-[repeating-conic-gradient(#000000_0_25%,#d4d0c8_0_50%)] bg-[length:2px_2px]" />
                <div className="flex-1 border-t border-t-white" />
                <ScrollArrow dir="right" />
              </div>
            </div>
          </div>

          <div className="mt-[1px] flex h-[26px] shrink-0 items-stretch text-[13.33px] text-[#1a1a1a]">
            <div className="ml-[2px] flex w-[1284px] items-center border border-t-[#808080] border-l-[#808080] border-r-white border-b-white pl-[2px] pt-[1px]">
              Click objects or drag a box to select (Hold Ctrl to add, Shift to remove)
            </div>
            <div className="ml-[2px] flex w-[147px] items-center border border-t-[#808080] border-l-[#808080] border-r-white border-b-white pl-[11px] pt-[1px] text-[#303030]">
              <span className="font-bold">XY</span>&nbsp;5.216, 5.282
            </div>
            <div className="ml-[2px] flex w-[175px] items-center border border-t-[#808080] border-l-[#808080] border-r-white border-b-white pl-[13px] pr-[1px]">
              <div className="h-[21px] flex-1 border-2 border-t-[#606060] border-l-[#606060] border-r-white border-b-white" />
            </div>
            <div className="ml-[2px] flex w-[27px] items-center justify-center border border-t-white border-l-white border-r-[#808080] border-b-[#808080]">
              <svg width="17" height="11" viewBox="0 0 17 11" className="block">
                <path d="M0.5 0.5H11V10.5H0.5ZM0.5 3.5H11M0.5 6.5H11M4 0.5V10.5" fill="#dcdcd4" stroke="#909090" />
                <path d="M12 0L17 5.5L12 11Z" fill="#909090" />
              </svg>
            </div>
          </div>
          <div className="h-[2px] shrink-0 bg-[#f4f4f4]" />
          <div className="h-[2px] shrink-0 bg-black" />
        </div>
        <div className="flex-1 bg-[#f0f0f0]" />
      </div>

      <Taskbar />
    </div>
  )
}
